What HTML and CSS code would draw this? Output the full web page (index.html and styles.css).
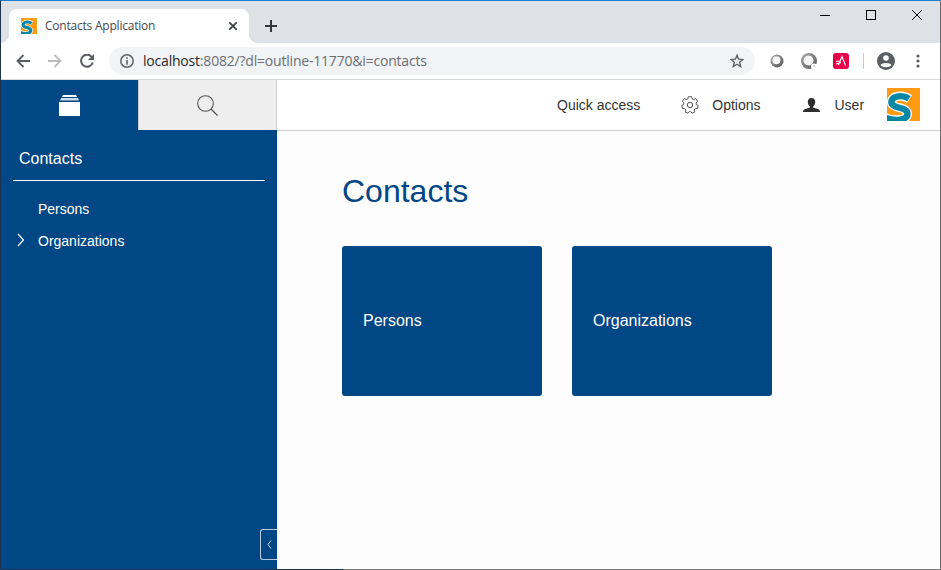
FILE: index.html
```html
<!DOCTYPE html>
<html lang="en">
<head>
<meta charset="utf-8">
<title>Contacts Application</title>
<link rel="stylesheet" href="styles.css">
</head>
<body>
<svg class="defs" width="0" height="0">
  <symbol id="logo" viewBox="0 0 33 33">
    <rect width="33" height="33" fill="#ff9a13"/>
    <path d="M22.500 11C18.500 8.300 14.500 7.800 11 8.300C4.500 9.200 2.500 14.500 6.500 17.500C10.500 20.500 20 19.500 20.500 25.500C20.500 32.500 8 33.500 -2 29.500" fill="none" stroke="#fff" stroke-width="9"/>
    <path d="M22 10.700C18.500 8.300 14.500 7.800 11 8.300C4.500 9.200 2.500 14.500 6.500 17.500C10.500 20.500 20 19.500 20.500 25.500C20.500 32.500 8 33.500 -2 29.500" fill="none" stroke="#0787a5" stroke-width="6.300"/>
  </symbol>
</svg>
<div class="window">
  <div class="tabstrip">
    <div class="browser-tab">
      <svg class="favicon"><use href="#logo"/></svg>
      <span class="tab-title">Contacts Application</span>
      <svg class="tab-close" width="10" height="10" viewBox="0 0 10 10"><path d="M1.300 1.300L8.700 8.700M8.700 1.300L1.300 8.700" stroke="#3c4043" stroke-width="1.700"/></svg>
    </div>
    <svg class="new-tab" width="12" height="12" viewBox="0 0 12 12"><path d="M6 0V12M0 6H12" stroke="#33363a" stroke-width="2"/></svg>
    <div class="controls">
      <svg width="10" height="10"><path d="M0 5.500H10" stroke="#000"/></svg>
      <svg width="10" height="10"><rect x=".5" y=".5" width="9" height="9" fill="none" stroke="#000"/></svg>
      <svg width="10" height="10"><path d="M0 0L10 10M10 0L0 10" stroke="#000"/></svg>
    </div>
  </div>
  <div class="toolbar">
    <svg class="nav back" width="14" height="14" viewBox="0 0 14 14"><path d="M14 7H1.500M7.500 1L1.500 7L7.500 13" fill="none" stroke="#5a5d61" stroke-width="1.800"/></svg>
    <svg class="nav forward" width="14" height="14" viewBox="0 0 14 14"><path d="M0 7H12.500M6.500 1L12.500 7L6.500 13" fill="none" stroke="#babcbe" stroke-width="1.800"/></svg>
    <svg class="nav reload" width="14" height="14" viewBox="0 0 14 14"><path d="M11.800 3A6 6 0 1 0 12.800 8.500" fill="none" stroke="#5a5d61" stroke-width="2"/><path d="M14 0V6H8Z" fill="#5a5d61"/></svg>
    <div class="address">
      <svg class="info" width="14" height="14" viewBox="0 0 14 14"><circle cx="7" cy="7" r="6.200" fill="none" stroke="#5f6368" stroke-width="1.500"/><path d="M7 3.200V4.800M7 6V10.700" stroke="#5f6368" stroke-width="1.600"/></svg>
      <span class="url"><span class="host">localhost</span>:8082/?dl=outline-11770&amp;i=contacts</span>
      <svg class="star" width="14" height="14" viewBox="0 0 14 14"><path d="M7 1.300L8.600 5.200L12.900 5.500L9.600 8.200L10.700 12.500L7 10.200L3.300 12.500L4.400 8.200L1.100 5.500L5.400 5.200Z" fill="none" stroke="#5f6368" stroke-width="1.400"/></svg>
    </div>
    <svg class="ext ring" width="14" height="14" viewBox="0 0 14 14"><defs><linearGradient id="g" x1="0" y1="0" x2="1" y2="1"><stop offset="0" stop-color="#aaa"/><stop offset="1" stop-color="#555"/></linearGradient></defs><circle cx="7" cy="7" r="6.500" fill="url(#g)"/><circle cx="6.400" cy="6.200" r="4" fill="#f5f5f5"/></svg>
    <svg class="ext ring-two" width="16" height="16" viewBox="0 0 16 16"><circle cx="8" cy="8" r="8" fill="url(#g)"/><circle cx="7.500" cy="7.500" r="5" fill="#f5f5f5"/><circle cx="13" cy="13.500" r="3" fill="#fff"/><circle cx="13" cy="13" r=".8" fill="#aaa"/></svg>
    <svg class="ext red" width="16" height="16" viewBox="0 0 16 16"><rect width="16" height="16" rx="3" fill="#e6004c"/><path d="M5.500 12L9 3.500L12.500 12.500M3 8.200H7.500M3 11L8 9.500" fill="none" stroke="#fff" stroke-width="1.100"/></svg>
    <span class="divider"></span>
    <svg class="avatar" width="18" height="18" viewBox="0 0 18 18"><circle cx="9" cy="9" r="9" fill="#5a5d61"/><circle cx="9" cy="6" r="2.800" fill="#fff"/><path d="M3.500 13C4.500 10.300 13.500 10.300 14.500 13C12 16 6 16 3.500 13Z" fill="#fff"/></svg>
    <svg class="more" width="4" height="14" viewBox="0 0 4 14"><g fill="#5a5d61"><circle cx="2" cy="2" r="1.600"/><circle cx="2" cy="7" r="1.600"/><circle cx="2" cy="12" r="1.600"/></g></svg>
  </div>
  <div class="app">
    <aside class="sidebar">
      <div class="views">
        <div class="view active"><svg width="21" height="21" viewBox="0 0 21 21"><g fill="#fff"><path d="M4 0H17L18 2H3Z"/><path d="M2 3H19L20 5.500H1Z" opacity=".8"/><path d="M0 7H21V21H0Z"/></g></svg></div>
        <div class="view"><svg width="21" height="21" viewBox="0 0 21 21"><circle cx="8.500" cy="8.500" r="7.800" fill="none" stroke="#555" stroke-width="1.100"/><path d="M14 14L20.500 20.500" stroke="#555" stroke-width="1.300"/></svg></div>
      </div>
      <div class="outline-title">Contacts</div>
      <nav class="tree">
        <div class="node">Persons</div>
        <div class="node"><svg class="chevron" width="8" height="14" viewBox="0 0 8 14"><path d="M1 1L6.500 7L1 13" fill="none" stroke="#fff" stroke-width="1.200"/></svg>Organizations</div>
      </nav>
      <div class="collapse"><svg width="5" height="9" viewBox="0 0 5 9"><path d="M4 .5L1 4.500L4 8.500" fill="none" stroke="#c9d6e3"/></svg></div>
    </aside>
    <main class="main">
      <header class="header">
        <span class="quick">Quick access</span>
        <svg class="gear" width="18" height="18" viewBox="0 0 18 18"><path d="M7.300 .8H10.700L11.300 3L12.800 3.600L14.700 2.500L16.500 5.200L15.200 6.800V8.500L17.200 9.500L16.500 12.500L14.300 12.700L13.200 14L13.700 16L11 17.200L9.700 15.600H8.300L7 17.200L4.300 16L4.800 14L3.700 12.700L1.500 12.500L.8 9.500L2.800 8.500V6.800L1.500 5.200L3.300 2.500L5.200 3.600L6.700 3Z" fill="none" stroke="#555" stroke-linejoin="round"/><circle cx="9" cy="9" r="2.700" fill="none" stroke="#555"/></svg>
        <span class="options">Options</span>
        <svg class="person" width="17" height="14" viewBox="0 0 17 14"><path d="M8.500 0C6 0 4.600 1.700 4.800 4.300C5 6.500 6 8 7 8.700V9.500L1.500 11.200Q0 12 0 14H17Q17 12 15.500 11.200L10 9.500V8.700C11 8 12 6.500 12.200 4.300C12.400 1.700 11 0 8.500 0Z" fill="#2e2e2e"/></svg>
        <span class="user">User</span>
        <svg class="app-logo"><use href="#logo"/></svg>
      </header>
      <div class="content">
        <h1>Contacts</h1>
        <div class="tiles">
          <div class="tile">Persons</div>
          <div class="tile">Organizations</div>
        </div>
      </div>
    </main>
  </div>
  <div class="window-edge"></div>
</div>
</body>
</html>
```
FILE: styles.css
```css
* { box-sizing: border-box; }
body { margin: 0; font-family: "Liberation Sans", Arial, sans-serif; font-size: 14px; color: #333; overflow: hidden; }
svg { display: block; flex: none; }
.defs { position: absolute; }
.window { width: 941px; height: 570px; border: 1px solid; border-color: #1a7fd4 #6b6b6b #1d344d #1d344d; border-bottom: 0; display: flex; flex-direction: column; background: #fff; }
.window-edge { height: 1px; flex: none; background: linear-gradient(to right, #1d344d 342px, #777 342px); }
.tabstrip { height: 42px; background: #dee1e6; display: flex; padding: 8px 0 0 8px; flex: none; }
.browser-tab { width: 240px; height: 34px; border-radius: 8px 8px 0 0; background: #fff; display: flex; align-items: center; padding: 0 11px 0 12px; font: 12px "Open Sans", sans-serif; color: #45494d; position: relative; }
.browser-tab::before, .browser-tab::after { content: ""; position: absolute; bottom: 0; width: 8px; height: 8px; }
.browser-tab::before { left: -8px; background: radial-gradient(circle at 0 0, transparent 7.500px, #fff 8px); }
.browser-tab::after { right: -8px; background: radial-gradient(circle at 100% 0, transparent 7.500px, #fff 8px); }
.favicon { width: 16px; height: 16px; }
.tab-title { margin: -1px 0 0 8px; white-space: nowrap; letter-spacing: -0.22px; }
.tab-close { margin-left: auto; }
.new-tab { margin: 11px 0 0 16px; }
.controls { display: flex; gap: 36px; margin: 1px 18px 0 auto; }
.toolbar { height: 37px; border-bottom: 1px solid #d6d7da; display: flex; align-items: center; padding-left: 15px; flex: none; }
.forward { margin-left: 18px; }
.reload { margin-left: 18px; }
.address { margin-left: 15px; width: 646px; height: 28px; border-radius: 14px; background: #f1f3f4; display: flex; align-items: center; padding: 0 11px; font: 14px "Open Sans", sans-serif; color: #6b6f74; }
.url { margin: -1px 0 0 9px; white-space: nowrap; letter-spacing: -0.2px; }
.host { color: #292a2d; }
.star { margin-left: auto; }
.ring { margin-left: 15px; }
.ring-two { margin-left: 17px; }
.red { margin-left: 16px; }
.divider { width: 1px; height: 16px; background: #ccc; margin-left: 14px; }
.avatar { margin-left: 13px; }
.more { margin-left: 21px; }
.app { display: flex; flex: 1; min-height: 0; }
.sidebar { width: 276px; background: #014786; color: #fff; position: relative; }
.views { height: 50px; display: flex; }
.view { width: 139px; background: #eee; border: 1px solid #ccc; border-width: 0 1px; display: flex; align-items: center; justify-content: center; }
.view.active { width: 137px; background: #014786; border: 0; }
.outline-title { margin: 0 12px; padding: 20px 6px 0; height: 51px; border-bottom: 1px solid #fff; font-size: 16px; line-height: 18px; }
.tree { padding-top: 12px; }
.node { height: 32px; line-height: 32px; padding-left: 37px; position: relative; }
.chevron { position: absolute; left: 16px; top: 8px; }
.collapse { position: absolute; right: 0; bottom: 9px; width: 17px; height: 31px; border: 1px solid #b8cadb; border-right: 0; border-radius: 3px 0 0 3px; display: flex; align-items: center; padding-left: 6px; }
.main { flex: 1; background: #fdfdfd; }
.header { height: 51px; background: #fff; border-bottom: 1px solid #ccc; display: flex; align-items: center; padding-left: 280px; white-space: nowrap; }
.gear { margin-left: 41px; }
.options { margin-left: 13px; }
.person { margin-left: 42px; }
.user { margin-left: 15px; }
.app-logo { width: 33px; height: 33px; margin: -1px 0 0 23px; }
.content { padding: 40px 65px; }
h1 { margin: 0; font-size: 32px; line-height: 40px; font-weight: 400; color: #014786; }
.tiles { display: flex; gap: 30px; margin-top: 35px; }
.tile { width: 200px; height: 150px; background: #014786; border-radius: 3px; color: #fff; font-size: 16px; display: flex; align-items: center; padding-left: 21px; }
```
